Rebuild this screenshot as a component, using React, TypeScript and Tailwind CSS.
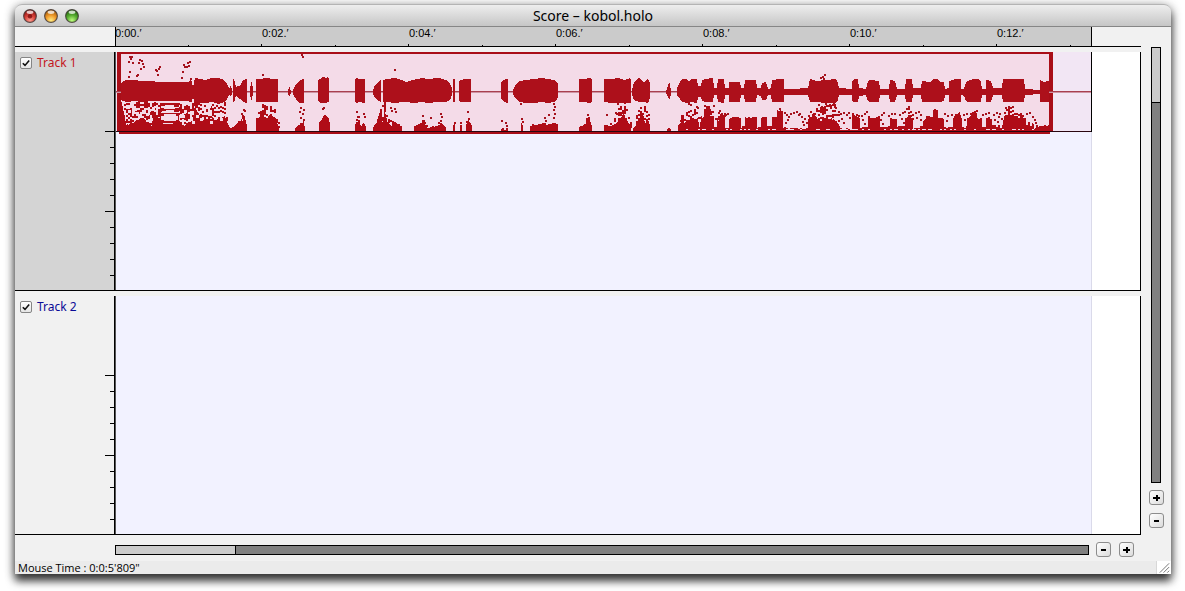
import React from 'react';

type Pt = [number, number, number];

// Amplitude outline per block: [x, top, bottom]
const WAVE: Pt[][] = [
  [[121, 84, 99], [123, 81, 100], [127, 80, 101], [134, 80, 100], [141, 81, 101], [154, 81, 100], [156, 82, 100], [188, 82, 100], [190, 80, 101], [192, 82, 101], [193, 88, 96], [195, 78, 102], [205, 80, 102], [212, 78, 101], [219, 78, 103], [224, 80, 101], [227, 84, 98], [229, 88, 94]],
  [[229, 89, 93], [231, 85, 96], [232, 90, 92]],
  [[233, 79, 101], [234, 79, 102], [235, 82, 98], [236, 88, 94], [237, 86, 96], [240, 86, 98], [243, 80, 101], [246, 79, 102], [247, 80, 101]],
  [[250, 91, 92], [251, 82, 99], [252, 82, 99], [253, 90, 92]],
  [[256, 79, 101], [262, 79, 101], [263, 78, 101], [277, 79, 101], [278, 80, 100]],
  [[288, 91, 92], [289, 87, 95], [290, 88, 95], [291, 91, 92]],
  [[293, 90, 93], [296, 84, 98], [299, 81, 102], [303, 79, 102], [304, 80, 101]],
  [[318, 80, 100], [320, 79, 102], [323, 77, 102], [326, 78, 102], [328, 77, 101], [329, 79, 101]],
  [[355, 80, 100], [356, 78, 102], [360, 79, 101], [364, 79, 102], [365, 80, 101]],
  [[373, 91, 92], [374, 87, 96], [377, 83, 99], [381, 79, 101]],
  [[383, 80, 101], [386, 79, 101], [395, 78, 102], [402, 80, 101], [406, 82, 101], [413, 80, 102], [422, 78, 101], [427, 79, 102], [439, 78, 101], [446, 80, 101], [450, 84, 99], [452, 88, 94]],
  [[453, 79, 101], [455, 79, 101]],
  [[459, 81, 99], [460, 80, 101], [465, 79, 101], [471, 79, 101]],
  [[501, 82, 98], [503, 80, 100], [507, 79, 102], [508, 80, 101]],
  [[513, 90, 93], [516, 84, 98], [520, 81, 101], [526, 80, 102], [534, 79, 102], [542, 78, 101], [548, 79, 102], [554, 80, 101], [557, 82, 98], [558, 84, 96]],
  [[579, 79, 101], [583, 79, 101], [590, 78, 102], [592, 79, 101]],
  [[604, 79, 101], [611, 79, 102], [619, 78, 102], [624, 80, 102], [630, 78, 102], [631, 80, 101]],
  [[632, 90, 94], [634, 82, 99], [639, 78, 101], [644, 83, 101], [647, 79, 102], [649, 80, 101], [650, 83, 95]],
  [[666, 91, 92], [668, 86, 96], [669, 83, 98], [670, 84, 98], [671, 91, 92]],
  [[677, 88, 94], [680, 82, 98], [682, 79, 101], [687, 79, 102], [689, 82, 101], [691, 79, 101], [697, 79, 102], [698, 86, 96], [701, 86, 96], [702, 80, 100], [705, 79, 101], [713, 78, 101], [714, 88, 94], [717, 88, 94], [718, 79, 101], [724, 79, 102], [725, 88, 94], [729, 88, 94], [729, 82, 101], [740, 82, 101], [741, 88, 94], [744, 88, 94], [745, 80, 101], [756, 80, 101], [757, 88, 94], [761, 88, 95], [762, 83, 99], [766, 82, 99], [768, 89, 94], [771, 88, 94], [772, 80, 101], [780, 79, 101], [784, 79, 101], [784, 89, 94], [796, 89, 94], [804, 88, 94], [808, 88, 94], [810, 79, 101], [816, 81, 101], [826, 80, 102], [836, 79, 102], [838, 83, 99], [839, 88, 94], [852, 89, 94], [852, 82, 100], [854, 79, 101], [858, 79, 101], [859, 88, 95], [866, 89, 94], [868, 81, 100], [870, 80, 101], [879, 81, 101], [880, 89, 94], [889, 89, 94], [890, 80, 101], [895, 81, 101], [897, 89, 94], [905, 89, 94], [906, 79, 101], [912, 79, 101], [913, 88, 94], [921, 88, 94], [922, 81, 101], [930, 82, 101], [933, 79, 101], [938, 79, 101], [940, 82, 101], [944, 82, 100], [945, 89, 94], [949, 88, 94], [949, 81, 101], [955, 79, 101], [961, 79, 101], [961, 89, 94], [964, 89, 95], [966, 82, 100], [968, 81, 101], [973, 79, 101], [978, 79, 101], [981, 82, 101], [982, 89, 94], [986, 89, 94], [986, 80, 101], [991, 81, 101], [993, 88, 94], [1002, 88, 94], [1003, 79, 101], [1015, 79, 101], [1024, 79, 101], [1025, 89, 94], [1040, 90, 93], [1040, 80, 101], [1044, 82, 101], [1048, 81, 101], [1049, 82, 101]],
];

// Spectrum profile per block: [x, solid top, scatter top]
const SPECTRUM: Pt[][] = [
  [[121, 102, 101], [123, 110, 102], [126, 126, 103], [134, 123, 102], [142, 119, 102], [151, 125, 103], [154, 116, 102], [160, 119, 106]],
  [[178, 122, 103], [184, 127, 106], [190, 121, 103], [195, 108, 102], [203, 121, 105], [211, 117, 104], [217, 121, 105], [224, 118, 102], [226, 121, 115], [229, 127, 125], [233, 128, 127], [236, 123, 123], [241, 121, 117], [244, 117, 110], [247, 127, 125]],
  [[256, 120, 112], [261, 115, 103], [265, 119, 106], [271, 116, 104], [276, 121, 113], [279, 128, 124]],
  [[295, 128, 128], [299, 125, 124], [303, 123, 119], [305, 127, 127]],
  [[319, 122, 119], [324, 115, 113], [328, 118, 114], [330, 126, 126]],
  [[355, 123, 118], [359, 121, 115], [361, 125, 124], [364, 122, 116], [366, 127, 127]],
  [[373, 126, 124], [376, 123, 121], [380, 109, 107], [381, 108, 105], [382, 123, 117], [384, 112, 102], [387, 123, 119], [391, 125, 120], [395, 123, 122], [402, 126, 126]],
  [[414, 126, 124], [423, 123, 120], [427, 128, 126], [432, 128, 126], [441, 123, 120], [446, 128, 127]],
  [[453, 124, 122], [455, 124, 122]],
  [[460, 125, 122], [462, 125, 122]],
  [[466, 124, 121], [468, 119, 118], [472, 127, 127]],
  [[501, 129, 128], [508, 129, 128]],
  [[521, 122, 118], [523, 124, 120]],
  [[530, 126, 124], [539, 125, 124], [546, 125, 122], [555, 125, 123], [558, 127, 127]],
  [[579, 127, 126], [585, 125, 124], [586, 118, 116], [589, 119, 118], [592, 127, 127]],
  [[604, 126, 123], [612, 126, 123], [618, 121, 108], [624, 114, 102], [628, 125, 111], [631, 128, 127]],
  [[633, 127, 125], [637, 123, 112], [641, 113, 103], [645, 122, 104], [648, 122, 114], [650, 127, 123]],
  [[667, 129, 128], [671, 129, 128]],
  [
    [678, 125, 124], [681, 122, 118], [681, 115, 112], [684, 116, 114], [684, 122, 117], [688, 120, 103], [697, 118, 106], [699, 127, 124],
    [701, 118, 109], [706, 115, 106], [713, 117, 107], [714, 128, 127], [717, 128, 127], [717, 119, 112], [724, 118, 113], [725, 128, 127],
    [729, 128, 127], [729, 119, 118], [733, 117, 117], [740, 118, 118], [741, 128, 126], [745, 128, 126], [745, 117, 117], [756, 117, 117],
    [757, 128, 127], [761, 128, 127], [761, 118, 117], [766, 118, 117], [767, 127, 126], [772, 127, 126], [772, 118, 117], [777, 117, 117],
    [777, 110, 108], [782, 111, 110], [783, 128, 128], [808, 129, 128], [808, 120, 113], [813, 113, 109], [818, 121, 108], [826, 121, 105],
    [834, 118, 104], [839, 126, 114], [840, 129, 128], [851, 129, 128], [852, 115, 113], [859, 117, 115], [860, 128, 127], [868, 128, 127],
    [868, 118, 116], [879, 117, 116], [880, 128, 127], [889, 127, 126], [890, 118, 117], [896, 119, 118], [897, 127, 126], [905, 127, 126],
    [905, 118, 115], [908, 116, 108], [912, 118, 114], [913, 128, 127], [922, 128, 126], [923, 121, 119], [926, 117, 116], [933, 117, 116],
    [933, 110, 109], [938, 110, 109], [938, 117, 117], [943, 118, 118], [944, 128, 127], [953, 128, 127], [953, 118, 116], [956, 113, 109],
    [959, 112, 109], [961, 118, 117], [962, 128, 127], [967, 127, 126], [967, 118, 117], [971, 116, 112], [973, 112, 108], [976, 113, 110],
    [977, 118, 117], [981, 118, 117], [982, 128, 127], [986, 127, 126], [986, 118, 117], [991, 119, 118], [992, 127, 125], [1002, 127, 125],
    [1003, 119, 113], [1006, 116, 109], [1010, 116, 107], [1018, 116, 110], [1025, 118, 115], [1026, 124, 120], [1033, 124, 121], [1034, 128, 127], [1042, 126, 125], [1049, 126, 125],
  ],
];

const SPECKS: [number, number][] = [
  [129, 56], [131, 56], [130, 58], [128, 61], [132, 62], [139, 59], [138, 62], [141, 60], [142, 63], [143, 66], [140, 68], [129, 71], [136, 75], [137, 74], [128, 76],
  [155, 69], [156, 70], [158, 68], [159, 66], [157, 74], [182, 71], [184, 66], [183, 64], [187, 62], [189, 61], [186, 66], [188, 65], [181, 77], [190, 78], [262, 74],
  [301, 54], [302, 56], [394, 69], [820, 77], [822, 76], [824, 74], [823, 78],
  [243, 109], [241, 113], [300, 107], [299, 111], [302, 113], [303, 109], [300, 117], [303, 119], [323, 107], [322, 108], [356, 111], [357, 116], [363, 113], [382, 105], [384, 104], [390, 107], [391, 110], [394, 108], [395, 111], [422, 115], [423, 120], [430, 117], [440, 113], [441, 116], [440, 120], [467, 111],
  [501, 120], [505, 122], [502, 128], [506, 125], [520, 103], [521, 118], [553, 103], [554, 106], [553, 109], [554, 113], [553, 117], [548, 114], [544, 117], [545, 120],
  [587, 114], [606, 114], [617, 103], [615, 112], [688, 102], [690, 104], [697, 107], [704, 105], [706, 108], [709, 109], [713, 105],
  [715, 118], [719, 110], [721, 113], [725, 114], [727, 113], [779, 108],
  [784, 112], [786, 114], [788, 116], [790, 113], [793, 112], [796, 111], [799, 113], [787, 119], [801, 116], [804, 118], [802, 121], [798, 114], [785, 122], [803, 124], [806, 122],
  [818, 104], [821, 106], [825, 103], [829, 104], [833, 103], [835, 107], [838, 111], [840, 113], [843, 112], [846, 114], [848, 112], [841, 118], [843, 122], [849, 117],
  [861, 115], [864, 113], [866, 111], [862, 119], [864, 123], [881, 114], [883, 112], [880, 119], [882, 123], [888, 115], [891, 113], [894, 113], [899, 114], [902, 112], [904, 111], [901, 118], [903, 122], [908, 106], [906, 108], [915, 112], [918, 111], [920, 114], [916, 117], [920, 119],
  [944, 113], [947, 115], [951, 114], [946, 120], [963, 114], [966, 113], [964, 119], [982, 114], [985, 113], [988, 112], [993, 114], [996, 112], [998, 116], [994, 119], [997, 121], [999, 113], [1001, 118], [1005, 107], [1008, 106], [1012, 106],
  [1026, 113], [1029, 112], [1032, 116], [1034, 119], [1035, 122], [1036, 125],
];

function noise(n: number) {
  const s = Math.sin(n * 127.1 + 11.7) * 43758.5453;
  return s - Math.floor(s);
}

function outline(points: Pt[]) {
  const top = points.map((p) => `${p[0]},${p[1]}`);
  const bottom = [...points].reverse().map((p) => `${p[0]},${p[2] + 1}`);
  return `M${top.join('L')}L${bottom.join('L')}Z`;
}

function spectrumPath(points: Pt[]) {
  let d = '';
  for (let i = 0; i < points.length - 1; i++) {
    const [xa, sa, ta] = points[i];
    const [xb, sb, tb] = points[i + 1];
    for (let x = xa; x < xb; x += 1) {
      const f = (x - xa) / (xb - xa);
      const cell = x - (x % 2);
      const rough = sa - ta > 3 ? 4 : 1.4;
      const solid = Math.round(sa + (sb - sa) * f + (noise(cell) - 0.5) * rough);
      const scatter = Math.round(ta + (tb - ta) * f);
      d += `M${x},${solid}h1V131h-1Z`;
      if (x % 2 === 0) {
        for (let y = scatter; y < solid; y += 2) {
          if (noise(x * 3 + y * 17) > 0.54) d += `M${x},${y}h2v2h-2Z`;
        }
      }
    }
  }
  return d;
}

const wavePath = WAVE.map(outline).join('');
const spectrum = SPECTRUM.map(spectrumPath).join('');
const speckPath = SPECKS.map(([x, y]) => `M${x},${y}h2v2h-2Z`).join('');
let gapPath = '';
for (let x = 684; x < 1046; x += 2) {
  if (noise(x * 7) > 0.68) gapPath += `M${x},129h2v1h-2Z`;
}
for (let x = 126; x < 224; x += 2) {
  if ((x < 158 || x > 180) && noise(x * 5) > 0.45) gapPath += `M${x},${104 + Math.floor(noise(x) * 18)}h3v3h-3Z`;
}

function SoundRegion() {
  return (
    <svg viewBox="116 52 976 82" preserveAspectRatio="none" shapeRendering="crispEdges" role="img" aria-label="Sound region" className="block h-[82px] w-full">
      <rect x="116" y="52" width="976" height="80" fill="#f2e6f4" />
      <rect x="117" y="52" width="936" height="80" fill="#a90e18" />
      <rect x="121" y="54" width="928" height="77" fill="#f4dbe8" />
      <rect x="119" y="132" width="931" height="2" fill="#a90e18" />
      <rect x="116" y="91" width="975" height="2" fill="#cf94a5" />
      <rect x="116" y="91" width="975" height="1" fill="#a8404f" />
      <path d={wavePath} fill="#ad101b" />
      <path d={spectrum} fill="#b00c17" />
      <path d={speckPath} fill="#a5121d" />
      <path d="M160,103H179V131H160Z" fill="#b00c17" />
      <path d="M161,106h4v-1h9v2h5v1h-4v1h-11v-1h-3ZM162,111h4v-1h8v2h5v1h-18ZM161,116h3v-2h12v2h2v4h-2v1h-12v-1h-3ZM163,123h10v1h-10Z" fill="#f4dbe8" />
      <path d={gapPath} fill="#f4dbe8" />
      <rect x="116" y="131" width="976" height="1" fill="#2a0710" />
      <rect x="1091" y="52" width="1" height="80" fill="#000" />
    </svg>
  );
}

const SCALE_TICKS = [79, 95, 111, 127, 143, 159, 175, 191, 207, 223];

function Track({ name, selected, children }: { name: string; selected?: boolean; children?: React.ReactNode }) {
  return (
    <section className="flex min-h-[239px] flex-1 border-b border-black">
      <div className={`flex w-[99px] shrink-0 justify-between ${selected ? 'bg-[#d4d4d4]' : 'bg-[#f1f1f1]'}`}>
        <label className={`flex h-[22px] items-center gap-[5px] pl-[5px] text-[12px] leading-4 ${selected ? 'text-[#c3161c]' : 'text-[#0a0a96]'}`}>
          <span className="grid">
            <input type="checkbox" defaultChecked className="peer col-start-1 row-start-1 size-3 appearance-none rounded-[2px] border border-[#858585] bg-gradient-to-b from-white to-[#e6e6e6]" />
            <svg viewBox="0 0 12 12" className="pointer-events-none invisible col-start-1 row-start-1 size-3 peer-checked:visible" fill="none" stroke="#111" strokeWidth="1.6">
              <path d="M2.8 6.2L5 8.4L9.2 3.4" />
            </svg>
          </span>
          {name}
        </label>
        <svg viewBox="0 0 9 238" shapeRendering="crispEdges" className="h-[238px] w-[9px] shrink-0" aria-hidden="true">
          {SCALE_TICKS.map((y) => {
            const major = y === 79 || y === 159;
            return <rect key={y} x={major ? 0 : 5} y={y} width={major ? 9 : 4} height="1" fill="#000" />;
          })}
        </svg>
      </div>
      <div className="w-[2px] shrink-0 border-r border-[#555] bg-black" />
      <div className="flex-1 bg-[#f2f2ff] shadow-[inset_-1px_0_0_#dadaea]">{children}</div>
      <div className="w-[49px] shrink-0 border-r border-black bg-white" />
    </section>
  );
}

function ZoomButton({ kind, label }: { kind: 'in' | 'out'; label: string }) {
  return (
    <button type="button" aria-label={label} className="flex size-[15px] shrink-0 items-center justify-center rounded-[3px] border border-[#8c8c8c] bg-gradient-to-br from-white to-[#dcdcdc]">
      <svg viewBox="0 0 13 13" shapeRendering="crispEdges" className="size-[13px]" fill="#000">
        {kind === 'in' ? <path d="M3 6h7v2H3ZM6 4h2v6H6Z" /> : <path d="M4 6h5v2H4Z" />}
      </svg>
    </button>
  );
}

const TIMES = ['0:00.′', '0:02.′', '0:04.′', '0:06.′', '0:08.′', '0:10.′'];
const LIGHTS = [
  { id: 'red', label: 'Close', dark: '#8f1715', mid: '#d8423a', light: '#ff9c8e' },
  { id: 'amber', label: 'Minimize', dark: '#a85f0c', mid: '#f09a2a', light: '#ffed83' },
  { id: 'green', label: 'Zoom', dark: '#286d12', mid: '#58ae31', light: '#c0ff80' },
];

export default function App() {
  return (
    <div className="flex min-h-screen flex-col overflow-hidden bg-white pt-1 pr-[14px] pb-[17px] pl-[15px] font-['Noto_Sans',sans-serif] text-black">
      <main className="flex flex-1 flex-col rounded-t-[7px] bg-[#f1f1f1] shadow-[0_7px_9px_rgba(0,0,0,0.7),0_2px_11px_rgba(0,0,0,0.45)]">
        <header className="grid h-[23px] grid-cols-[1fr_auto_1fr] items-center rounded-t-[7px] border-t border-b border-t-[#b4b4b4] border-b-[#868686] bg-gradient-to-b from-[#eeeeee] to-[#c6c6c6]">
          <div className="flex gap-[7px] pl-2">
            {LIGHTS.map((l) => (
              <button key={l.id} type="button" aria-label={l.label} className="size-[14px]">
                <svg viewBox="0 0 14 14" className="size-[14px]">
                  <defs>
                    <radialGradient id={`glow-${l.id}`} cx="50%" cy="85%" r="75%">
                      <stop offset="0" stopColor={l.light} />
                      <stop offset="0.55" stopColor={l.mid} />
                      <stop offset="1" stopColor={l.dark} />
                    </radialGradient>
                  </defs>
                  <circle cx="7" cy="7" r="6.4" fill={`url(#glow-${l.id})`} stroke="#3a3030" strokeOpacity="0.8" strokeWidth="1.1" />
                  <ellipse cx="7" cy="3.2" rx="3.4" ry="1.7" fill="#fff" fillOpacity="0.75" />
                  {l.id === 'red' && <circle cx="7" cy="7.3" r="2.2" fill="#7a0d0d" fillOpacity="0.8" />}
                </svg>
              </button>
            ))}
          </div>
          <h1 className="text-[14px] leading-4">Score – kobol.holo</h1>
          <div />
        </header>

        <div className="flex flex-1">
          <div className="flex min-w-0 flex-1 flex-col">
            <div className="flex h-5 shrink-0 border-b border-black">
              <div className="w-[100px] shrink-0" />
              <div className="grid min-w-0 flex-1 border-x border-black bg-[#cbcbcb] font-['Liberation_Sans',sans-serif] text-[11px] leading-[13px]">
                <div className="col-start-1 row-start-1 -ml-px flex min-w-0">
                  {TIMES.map((t) => (
                    <span key={t} className="min-w-0 flex-[147_0_0px]">{t}</span>
                  ))}
                  <span className="min-w-0 flex-[94_0_0px]">0:12.′</span>
                </div>
                <svg viewBox="0 0 975 2" preserveAspectRatio="none" shapeRendering="crispEdges" className="col-start-1 row-start-1 h-[2px] w-full self-end" aria-hidden="true">
                  {Array.from({ length: 13 }, (_, i) => (
                    <rect key={i} x={Math.round((i + 1) * 73.5) - 2} y={i % 2 ? 0 : 1} width="1" height={i % 2 ? 2 : 1} />
                  ))}
                </svg>
              </div>
              <div className="w-[49px] shrink-0" />
            </div>
            <div id="score" className="mt-[5px] flex flex-1 flex-col gap-[5px]">
              <Track name="Track 1" selected>
                <SoundRegion />
              </Track>
              <Track name="Track 2" />
            </div>
          </div>
          <aside className="flex w-[30px] shrink-0 flex-col items-center pt-5 pb-[7px]">
            <div role="scrollbar" aria-label="Vertical view" aria-controls="score" aria-valuenow={0} className="flex w-[10px] flex-1 flex-col border border-black bg-[#808080]">
              <div className="h-[55px] border-b border-black bg-[#cbcbcb]" />
            </div>
            <div className="mt-[7px] flex flex-col gap-2">
              <ZoomButton kind="in" label="Zoom in vertically" />
              <ZoomButton kind="out" label="Zoom out vertically" />
            </div>
          </aside>
        </div>

        <div className="flex h-[26px] shrink-0 items-start pt-[7px] pr-[37px] pl-[100px]">
          <div role="scrollbar" aria-label="Horizontal view" aria-controls="score" aria-valuenow={0} className="mt-[3px] mr-[7px] flex h-[10px] flex-1 border border-black bg-[#808080]">
            <div className="w-[120px] border-r border-black bg-[#cbcbcb]" />
          </div>
          <div className="flex gap-2">
            <ZoomButton kind="out" label="Zoom out horizontally" />
            <ZoomButton kind="in" label="Zoom in horizontally" />
          </div>
        </div>

        <footer className="flex h-[13px] shrink-0 items-center justify-between bg-[#ebebeb] pl-[3px] font-['Open_Sans',sans-serif] text-[11px] leading-[13px]">
          <p className="pb-px">Mouse Time : 0:0:5'809"</p>
          <svg viewBox="0 0 15 13" className="h-[13px] w-[15px] border-l border-[#d8d8d8] bg-white" fill="none" stroke="#707070" strokeWidth="1" aria-hidden="true">
            <path d="M3 12L13 2M7 12L13 6M11 12L13 10" />
          </svg>
        </footer>
      </main>
    </div>
  );
}
